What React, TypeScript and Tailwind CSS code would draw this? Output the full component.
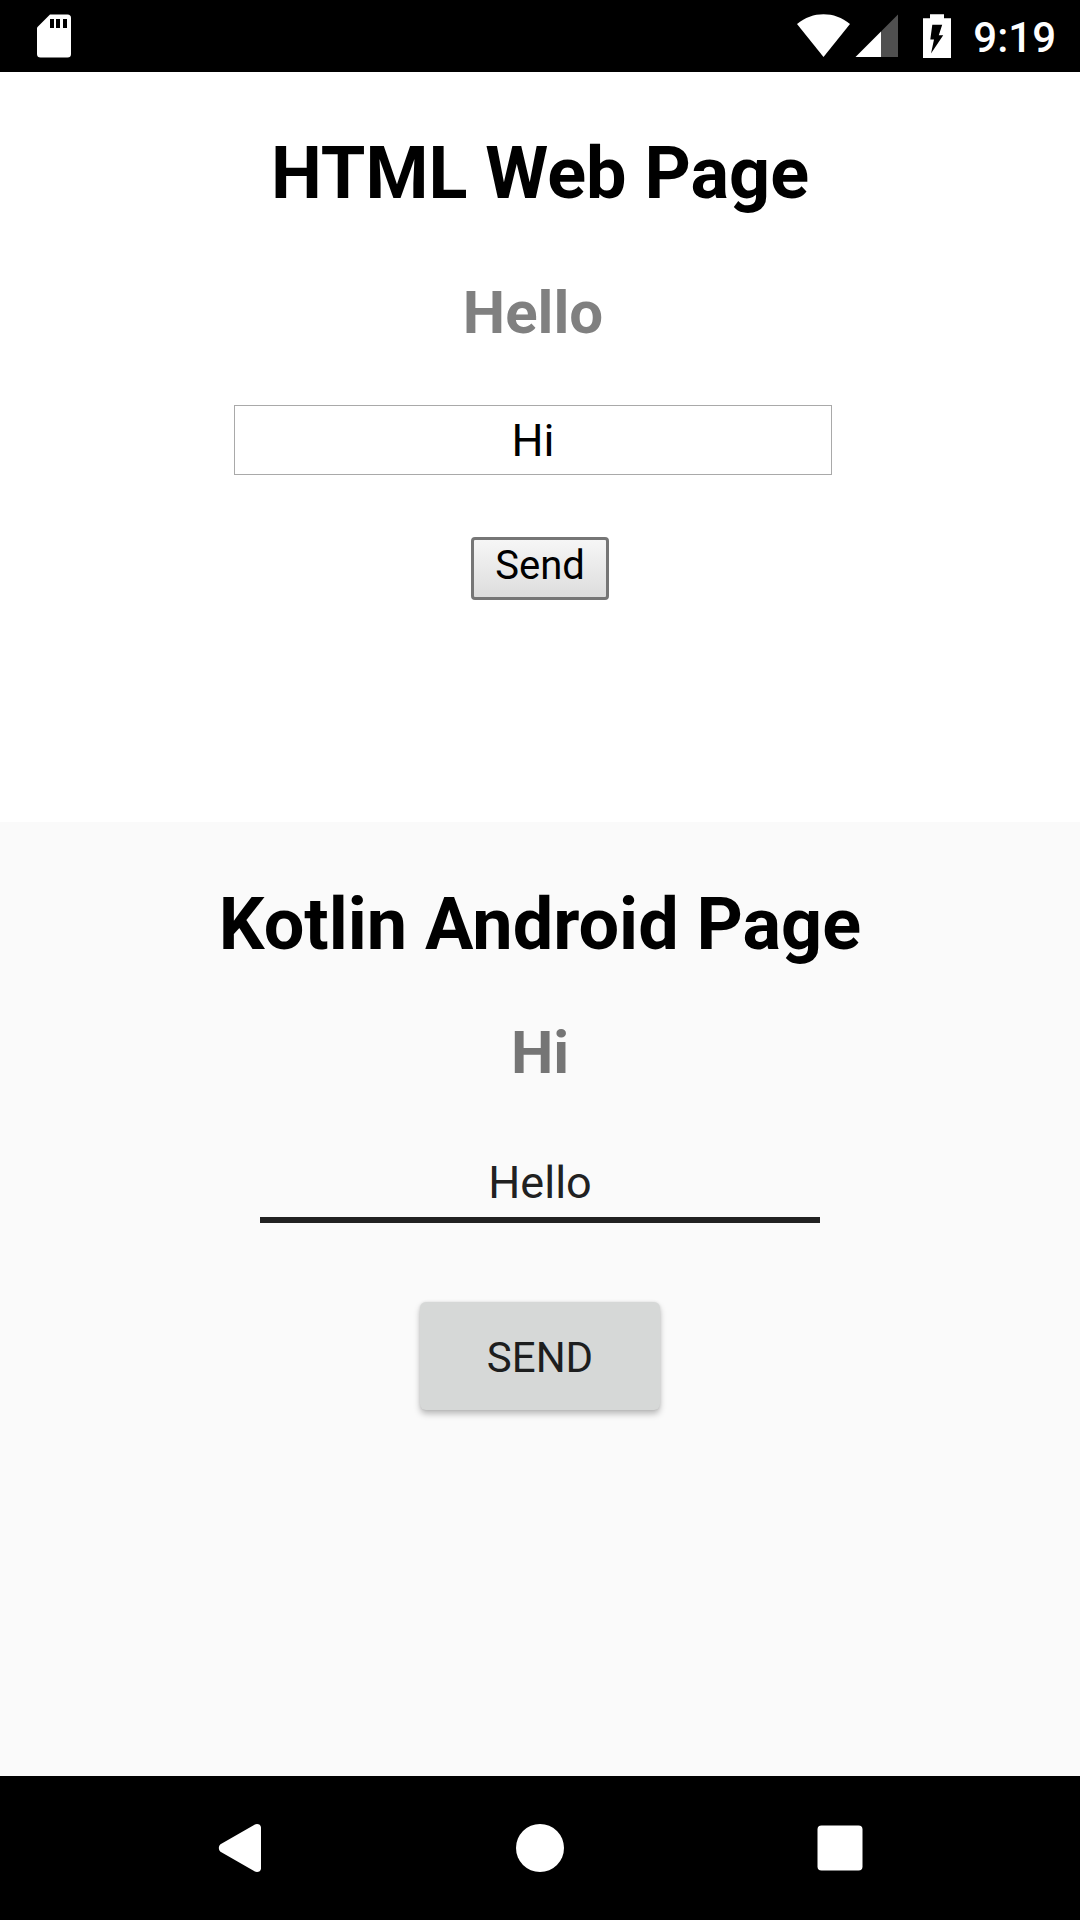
import { useState } from "react";

function StatusBar() {
  return (
    <header className="flex h-[72px] items-center justify-between bg-black pr-6 pl-[37px] text-white">
      <svg width="34" height="44" viewBox="0 0 34 44" role="img" aria-label="SD card">
        <path
          d="M13 0.5H30.5a3.5 3.5 0 0 1 3.5 3.5V40a3.5 3.5 0 0 1-3.5 3.5H3.5A3.5 3.5 0 0 1 0 40V13.5Z"
          fill="#fff"
        />
        <path d="M13 5h4v9h-4zM19 5h4v9h-4zM26 5h4v9h-4z" fill="#000" />
      </svg>
      <div className="flex items-center">
        <svg width="54" height="44" viewBox="0 0 54 44" role="img" aria-label="Wi-Fi">
          <path d="M0 10C8 3.5 17 0.3 26.5 0.3S45 3.5 53 10L26.5 43Z" fill="#fff" />
        </svg>
        <svg className="ml-1" width="44" height="44" viewBox="0 0 44 44" role="img" aria-label="Mobile signal">
          <path d="M43 0.5V43H26V17.5Z" fill="#505050" />
          <path d="M0.5 43L26 17.5V43Z" fill="#fff" />
        </svg>
        <svg className="ml-6" width="28" height="44" viewBox="0 0 28 44" role="img" aria-label="Battery charging">
          <path d="M7 0.3H21V4.3H28V44H0V4.3H7Z" fill="#fff" />
          <path d="M9.3 10.8H19.2L15.8 21.3H20.2L8 39.5L11 25.6H7.3Z" fill="#000" />
        </svg>
        <time className="ml-[22px] pt-1 text-[42px] leading-[50px] font-medium">9:19</time>
      </div>
    </header>
  );
}

function WebPage() {
  const [message, setMessage] = useState("Hi");
  return (
    <section className="flex min-h-[750px] flex-col items-center bg-white pt-[60px]">
      <h1 className="text-[72px] leading-[84px] font-bold">HTML Web Page</h1>
      <div className="mt-[62px] flex w-full flex-col items-center pr-[14px]">
        <h2 className="text-[60px] leading-[70px] font-bold text-[#808080]">Hello</h2>
        <input
          type="text"
          aria-label="Web message"
          value={message}
          onChange={(e) => setMessage(e.target.value)}
          className="mt-[57px] h-[70px] w-[598px] max-w-full border border-[#a9a9a9] bg-white text-center text-[45px] leading-[53px] outline-none"
        />
      </div>
      <button
        type="button"
        className="mt-[62px] rounded border-3 border-[#767676] bg-linear-to-b from-[#f6f6f6] to-[#dddddd] px-[21px] pb-[6px] text-[40px] leading-[51px]"
      >
        Send
      </button>
    </section>
  );
}

function AndroidPage() {
  const [message, setMessage] = useState("Hello");
  return (
    <section className="flex flex-1 flex-col items-center bg-[#fafafa] pt-[61px]">
      <h1 className="text-[72px] leading-[84px] font-bold">Kotlin Android Page</h1>
      <h2 className="mt-[51px] text-[60px] leading-[70px] font-bold text-[#757575]">Hi</h2>
      <input
        type="text"
        aria-label="Android message"
        value={message}
        onChange={(e) => setMessage(e.target.value)}
        className="mt-[68px] h-[67px] w-[560px] max-w-full border-b-6 border-[#212121] bg-transparent pb-2 text-center text-[45px] leading-[53px] text-[#212121] outline-none"
      />
      <button
        type="button"
        className="mt-[79px] h-[108px] w-[240px] rounded-md bg-[#d6d8d7] pt-1 text-[42px] leading-[50px] text-[#1d1e1e] shadow-[0_4px_6px_rgba(0,0,0,0.25),0_0_3px_rgba(0,0,0,0.1)]"
      >
        SEND
      </button>
    </section>
  );
}

function NavigationBar() {
  return (
    <nav className="grid h-[144px] grid-cols-3 place-items-center bg-black px-[90px]">
      <button type="button" aria-label="Back">
        <svg width="48" height="48" viewBox="0 0 48 48">
          <path
            d="M38.5 0.8C40.5-0.8 45 0 45 3.5V44.5C45 48 40.5 48.8 38.5 47.2L4.5 27.8C2.3 26 2.3 22 4.5 20.2Z"
            fill="#fff"
          />
        </svg>
      </button>
      <button type="button" aria-label="Home">
        <svg width="48" height="48" viewBox="0 0 48 48">
          <circle cx="24" cy="24" r="24" fill="#fff" />
        </svg>
      </button>
      <button type="button" aria-label="Recent apps">
        <svg width="48" height="48" viewBox="0 0 48 48">
          <rect x="1.5" y="1.5" width="45" height="45" rx="4" fill="#fff" />
        </svg>
      </button>
    </nav>
  );
}

export default function App() {
  return (
    <div className="flex min-h-screen flex-col font-[Roboto,sans-serif] text-black">
      <StatusBar />
      <main className="flex flex-1 flex-col">
        <WebPage />
        <AndroidPage />
      </main>
      <NavigationBar />
    </div>
  );
}
